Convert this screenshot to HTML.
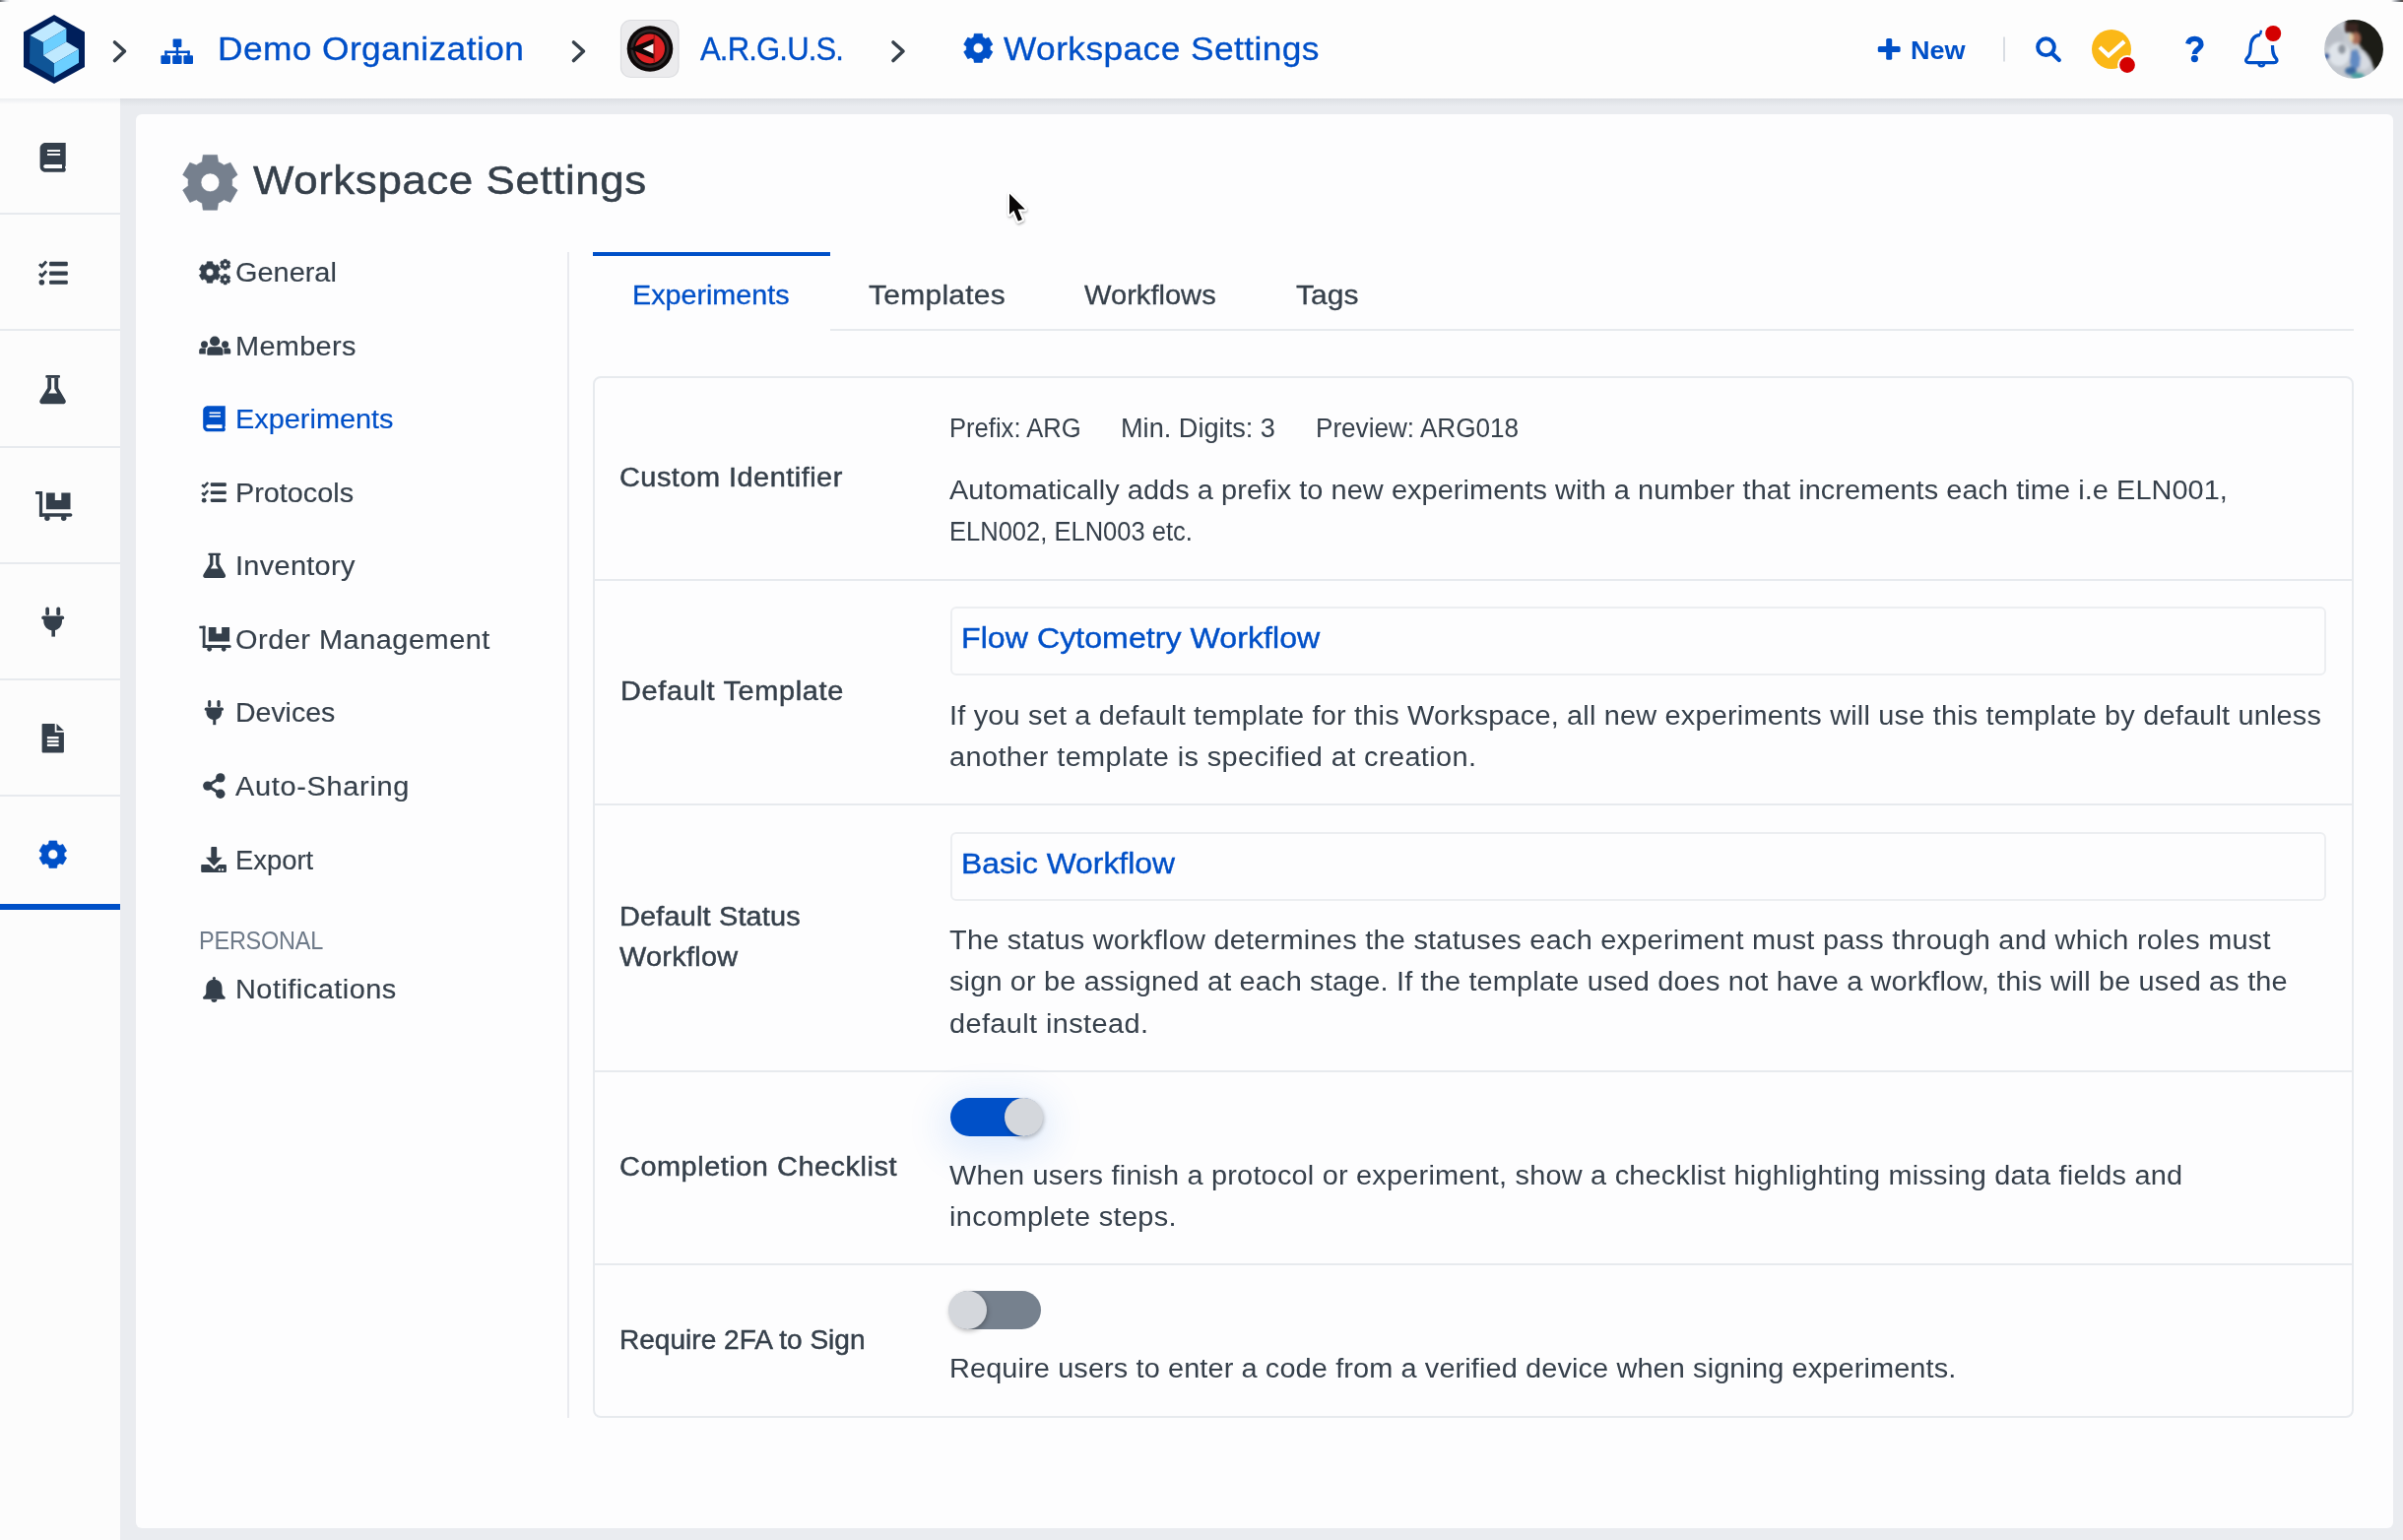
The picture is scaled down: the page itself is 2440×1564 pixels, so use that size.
<!DOCTYPE html>
<html><head><meta charset="utf-8"><title>Workspace Settings</title>
<style>
html,body{margin:0;padding:0;width:2440px;height:1564px;overflow:hidden;background:#eaecf0;font-family:"Liberation Sans",sans-serif;}
.b{position:absolute;box-sizing:border-box;}
.t{position:absolute;white-space:nowrap;transform-origin:0 0;font-family:"Liberation Sans",sans-serif;}
svg.ic{position:absolute;left:0;top:0;width:2440px;height:1564px;}
</style></head><body>
<div class="b" style="left:0;top:0;width:2440px;height:100px;background:#fdfdfd;"></div>
<div class="b" style="left:0;top:0;width:10px;height:1.6px;background:linear-gradient(90deg,#6d7075,rgba(200,205,212,0.6) 60%,rgba(253,253,253,0));"></div>
<div class="b" style="left:2428px;top:0;width:12px;height:2.2px;background:linear-gradient(90deg,rgba(253,253,253,0),#a9adb3 40%,#5e5f62 80%,#5d4f4a);"></div>
<div class="b" style="left:0;top:100px;width:2440px;height:8px;background:linear-gradient(#dcdfe4,#eaecf0);"></div>
<div class="b" style="left:0;top:100px;width:122px;height:1464px;background:#fcfcfc;"></div>
<div class="b" style="left:0;top:100px;width:122px;height:6px;background:linear-gradient(#eceef1,#fcfcfc);"></div>
<div class="b" style="left:0;top:216px;width:122px;height:2px;background:#e7eaee;"></div><div class="b" style="left:0;top:334px;width:122px;height:2px;background:#e7eaee;"></div><div class="b" style="left:0;top:452.5px;width:122px;height:2px;background:#e7eaee;"></div><div class="b" style="left:0;top:570.5px;width:122px;height:2px;background:#e7eaee;"></div><div class="b" style="left:0;top:688.5px;width:122px;height:2px;background:#e7eaee;"></div><div class="b" style="left:0;top:806.5px;width:122px;height:2px;background:#e7eaee;"></div>
<div class="b" style="left:341px;top:954px;width:187px;height:4px;background:#e8ebef;"></div>
<div class="b" style="left:0;top:918px;width:122px;height:6px;background:#0050c8;"></div>
<div class="b" style="left:138px;top:116px;width:2292px;height:1436px;background:#fdfdfe;border-radius:6px;"></div>
<div class="b" style="left:576px;top:256px;width:2px;height:1184px;background:#e9eaef;"></div>
<div class="b" style="left:602px;top:256px;width:241px;height:4px;background:#0050c8;"></div>
<div class="b" style="left:843px;top:334px;width:1547px;height:2px;background:#e7eaee;"></div>
<div class="b" style="left:602px;top:382px;width:1788px;height:1058px;border:2px solid #e7eaee;border-radius:8px;"></div>
<div class="b" style="left:604px;top:587.5px;width:1784px;height:2px;background:#e7eaee;"></div><div class="b" style="left:604px;top:815.8px;width:1784px;height:2px;background:#e7eaee;"></div><div class="b" style="left:604px;top:1087.2px;width:1784px;height:2px;background:#e7eaee;"></div><div class="b" style="left:604px;top:1282.8px;width:1784px;height:2px;background:#e7eaee;"></div>
<div class="b" style="left:965px;top:616px;width:1397px;height:70px;border:2px solid #eceef1;border-radius:6px;"></div>
<div class="b" style="left:965px;top:845px;width:1397px;height:70px;border:2px solid #eceef1;border-radius:6px;"></div>
<div class="b" style="left:965px;top:1115px;width:93px;height:39px;border-radius:20px;background:#0050c8;box-shadow:0 8px 36px 10px rgba(40,120,240,0.13);"></div>
<div class="b" style="left:1020px;top:1115px;width:39px;height:39px;border-radius:50%;background:#d4d7dc;box-shadow:1px 2px 4px rgba(0,0,0,0.25);"></div>
<div class="b" style="left:963.5px;top:1311px;width:93px;height:39px;border-radius:20px;background:#76818e;"></div>
<div class="b" style="left:963px;top:1311px;width:39px;height:39px;border-radius:50%;background:#d4d7dc;box-shadow:1px 2px 5px rgba(0,0,0,0.28);"></div>
<svg class="ic" viewBox="0 0 2440 1564">
<defs><filter id="csh" x="-50%" y="-50%" width="200%" height="200%"><feDropShadow dx="0.5" dy="1.5" stdDeviation="1.2" flood-color="#000" flood-opacity="0.35"/></filter></defs>
<polygon points="55,15 86,32.5 86,68 55,85 24,68 24,32.5" fill="#001f5b"/>
<polygon points="30.5,36 55,21.5 67.4,29 43.7,43" fill="#bfe9ff"/>
<polygon points="43.7,43 67.4,29 67.4,42.5 43.7,56.2" fill="#6ccfff"/>
<polygon points="43.7,56.2 67.4,42.5 80,50 55,64.4" fill="#bfe9ff"/>
<polygon points="55,64.4 80,50 80,63.7 55,78.4" fill="#6ccfff"/>
<polygon points="30.5,36 43.7,43 43.7,56.2 55,64.4 55,78.4 30,64" fill="#0f5597"/>
<polyline points="116.5,43 126.5,52 116.5,61.5" fill="none" stroke="#37414b" stroke-width="3.6" stroke-linecap="round" stroke-linejoin="round"/>
<polyline points="582.5,43 592.5,52 582.5,61.5" fill="none" stroke="#37414b" stroke-width="3.6" stroke-linecap="round" stroke-linejoin="round"/>
<polyline points="907,43 917,52 907,61.5" fill="none" stroke="#37414b" stroke-width="3.6" stroke-linecap="round" stroke-linejoin="round"/>
<g fill="#0050c8"><rect x="175.6" y="39.4" width="8.8" height="8.6" rx="1"/><rect x="178.8" y="47" width="2.4" height="6"/><rect x="167.3" y="51.6" width="25.4" height="2.4"/><rect x="167.3" y="51.6" width="2.4" height="5"/><rect x="178.8" y="51.6" width="2.4" height="5"/><rect x="190.3" y="51.6" width="2.4" height="5"/><rect x="163.4" y="56.2" width="9.6" height="8.8" rx="1"/><rect x="175.2" y="56.2" width="9.4" height="8.8" rx="1"/><rect x="186.4" y="56.2" width="9.6" height="8.8" rx="1"/></g>
<rect x="630.5" y="20.5" width="58.5" height="58" rx="10" fill="#ebebed" stroke="#dcdde0" stroke-width="1.2"/>
<circle cx="660" cy="49.5" r="23.3" fill="#0d0808"/>
<circle cx="660" cy="49.5" r="19.6" fill="#2f2a2b"/>
<circle cx="660" cy="49.5" r="17.0" fill="#120b0b"/>
<circle cx="660" cy="49.5" r="15.0" fill="#e02224"/>
<polygon points="639,49.5 664,39.2 664,44.2 652.5,49.5 664,54.8 664,59.8" fill="#0d0808"/>
<polygon points="652.8,49.6 663.6,44.6 663.6,54.6" fill="#f5f5f5"/>
<rect x="663.6" y="35" width="1.5" height="29" fill="#a01515"/>
<path d="M988.71,37.81 L989.25,34.35 L997.35,34.35 L997.89,37.81 A12.00,12.00 0 0 1 1000.60,39.38 L1003.87,38.12 L1007.92,45.13 L1005.20,47.34 A12.00,12.00 0 0 1 1005.20,50.46 L1007.92,52.67 L1003.87,59.68 L1000.60,58.42 A12.00,12.00 0 0 1 997.89,59.99 L997.35,63.45 L989.25,63.45 L988.71,59.99 A12.00,12.00 0 0 1 986.00,58.42 L982.73,59.68 L978.68,52.67 L981.40,50.46 A12.00,12.00 0 0 1 981.40,47.34 L978.68,45.13 L982.73,38.12 L986.00,39.38 A12.00,12.00 0 0 1 988.71,37.81 Z M998.40,48.90 A5.1,5.1 0 1 0 988.20,48.90 A5.1,5.1 0 1 0 998.40,48.90 Z" fill="#0050c8" fill-rule="evenodd" stroke="#0050c8" stroke-width="0.6" stroke-linejoin="round"/>
<g fill="#0050c8"><rect x="1915.2" y="39" width="6" height="21.8" rx="1.6"/><rect x="1906.8" y="47" width="22.8" height="6" rx="1.6"/></g>
<rect x="2034" y="37.5" width="2" height="25" fill="#d9dde3"/>
<circle cx="2077.5" cy="47.7" r="8.4" fill="none" stroke="#0050c8" stroke-width="3.9"/>
<line x1="2084" y1="54.5" x2="2090.8" y2="61" stroke="#0050c8" stroke-width="4.2" stroke-linecap="round"/>
<circle cx="2144" cy="50" r="20" fill="#fbb817"/>
<polyline points="2133.5,49.5 2141,56.5 2155.5,43.5" fill="none" stroke="#ffffff" stroke-width="4.2" stroke-linecap="square"/>
<circle cx="2160" cy="66" r="10" fill="#fdfdfd"/><circle cx="2160" cy="66" r="7.9" fill="#d40000"/>
<path d="M2221.6,44.6 C2222.6,40.6 2225.4,39.2 2228.8,39.3 C2232.8,39.5 2235.2,42 2235,45.4 C2234.8,49.4 2228.6,50.2 2228.4,55" fill="none" stroke="#0050c8" stroke-width="5.2" stroke-linecap="butt"/>
<circle cx="2228.4" cy="59.6" r="3.6" fill="#0050c8"/>
<path d="M2295,35.3 C2288,36 2285.5,41 2285.2,48 C2285,54 2284.5,56 2281.5,59.2 C2279.6,61.4 2281,63.7 2283.5,63.7 L2309,63.7 C2311.5,63.7 2313,61.4 2311,59.2 C2308,56 2307.5,53 2307.5,46" fill="none" stroke="#0050c8" stroke-width="3.2" stroke-linejoin="round"/>
<path d="M2293.6,64.5 A2.7,2.7 0 0 0 2299,64.5" fill="none" stroke="#0050c8" stroke-width="2.6"/>
<path d="M2295,35.3 L2296,30.8" stroke="#0050c8" stroke-width="2.4"/>
<circle cx="2308.2" cy="34" r="10" fill="#fdfdfd"/><circle cx="2308.2" cy="34" r="8" fill="#d40000"/>
<defs><clipPath id="av"><circle cx="2390" cy="49.9" r="29.9"/></clipPath><filter id="bl" x="-20%" y="-20%" width="140%" height="140%"><feGaussianBlur stdDeviation="1.8"/></filter></defs>
<g clip-path="url(#av)"><rect x="2358" y="18" width="64" height="64" fill="#c3c8cf"/>
<g filter="url(#bl)">
<ellipse cx="2370" cy="38" rx="10" ry="12" fill="#b9bec6"/>
<ellipse cx="2375" cy="55" rx="11" ry="12" fill="#dfe4ea"/>
<ellipse cx="2400" cy="62" rx="7" ry="9" fill="#d7dbe2"/>
<polygon points="2381,18 2424,18 2424,82 2413,74 2405,58 2396,46 2389,36 2383,30" fill="#1f1c15"/>
<rect x="2381" y="24" width="13" height="9" fill="#3a2620"/>
<ellipse cx="2392" cy="39" rx="4.5" ry="6" fill="#a86a55"/>
<ellipse cx="2387.5" cy="38" rx="2" ry="4" fill="#e8cfa6"/>
<ellipse cx="2378" cy="50" rx="4" ry="5" fill="#9097a0"/>
<polygon points="2387,52 2393,50 2397,58 2396,68 2388,71 2386,62" fill="#4f7fc0" opacity="0.85"/>
<ellipse cx="2387" cy="72" rx="6" ry="4" fill="#2f5f9a" opacity="0.9"/>
<ellipse cx="2394" cy="77" rx="7" ry="3" fill="#4aa0a0"/>
<ellipse cx="2363" cy="57" rx="2.5" ry="3" fill="#1d4f9a"/>
</g></g>
<g transform="translate(40.6 144.9) scale(1)"><path d="M5.5,0 L26.1,0 L26.1,23.5 C25.4,24 25.2,25 25.6,25.8 L26.1,26.4 C26.4,28.2 25.8,29.9 24,29.9 L5.5,29.9 C2.5,29.9 0,27.4 0,24.4 L0,5.5 C0,2.5 2.5,0 5.5,0 Z" fill="#343f4b"/><rect x="7.4" y="7.2" width="13.1" height="1.9" fill="#fcfcfc"/><rect x="7.4" y="11.1" width="13.1" height="1.9" fill="#fcfcfc"/><path d="M5.6,22 L22.4,22 L22.4,26.1 L5.6,26.1 C4.3,26.1 3.6,25 3.6,24.05 C3.6,23 4.3,22 5.6,22 Z" fill="#fcfcfc"/></g>
<g transform="translate(38.9 264.4) scale(1)" fill="#343f4b"><polyline points="1.1,3.9 3.6,6.2 8.2,1.2" fill="none" stroke="#343f4b" stroke-width="2.9"/><polyline points="1.1,13.5 3.6,15.8 8.2,10.8" fill="none" stroke="#343f4b" stroke-width="2.9"/><circle cx="3.5" cy="22.4" r="2.8"/><rect x="11.2" y="1.4" width="18.7" height="4.5" rx="1.2"/><rect x="11.2" y="11.1" width="18.7" height="4.2" rx="1.2"/><rect x="11.2" y="20.4" width="18.7" height="4" rx="1.2"/></g>
<g transform="translate(40.3 380.3) scale(1)"><rect x="6" y="0.8" width="14.7" height="2.6" rx="1" fill="#343f4b"/><path d="M8,3.3 L18.9,3.3 L18.9,13.7 L26.1,26 C27.2,28 26,30 23.6,30 L2.8,30 C0.5,30 -0.7,28 0.4,26 L8,13.7 Z" fill="#343f4b"/><path d="M11.8,3.6 L15,3.6 L15,14.5 L17.9,19.2 L8.9,19.2 L11.8,14.5 Z" fill="#fcfcfc"/></g>
<g transform="translate(35.8 493) scale(1)" fill="#343f4b"><rect x="0.2" y="6" width="7" height="3" rx="0.4"/><rect x="4.1" y="6" width="3.2" height="25.8"/><rect x="4.1" y="28.2" width="33.5" height="3.6" rx="1.8"/><circle cx="12.1" cy="33.3" r="2.7"/><circle cx="28.9" cy="33.3" r="2.7"/><path d="M11.1,7.5 L20,7.5 L20,15.1 L26.5,15.1 L26.5,7.5 L35.7,7.5 L35.7,24.3 L11.1,24.3 Z"/></g>
<g transform="translate(42.2 616.6) scale(1)" fill="#343f4b"><rect x="4.1" y="0" width="3.7" height="8.5" rx="1.8"/><rect x="15.1" y="0" width="3.9" height="8.5" rx="1.9"/><rect x="0" y="9" width="23" height="3.7" rx="1.8"/><path d="M2.1,12 L20.8,12 L20.8,14.5 C20.8,19.5 17,23.6 12,23.8 L11,23.8 C6,23.6 2.1,19.5 2.1,14.5 Z"/><rect x="10.2" y="22.5" width="3.6" height="7.5"/></g>
<g transform="translate(42.6 734.9) scale(1)"><path d="M0.8,0 L13.1,0 L13.1,8.9 L22.3,8.9 L22.3,28.7 C22.3,29.1 21.9,29.5 21.5,29.5 L0.8,29.5 C0.4,29.5 0,29.1 0,28.7 L0,0.8 C0,0.4 0.4,0 0.8,0 Z" fill="#343f4b"/><polygon points="14.9,0.2 22.3,7.1 14.9,7.1" fill="#343f4b"/><rect x="5.3" y="13.1" width="11.7" height="2.4" fill="#fcfcfc"/><rect x="5.3" y="16.9" width="11.7" height="2.4" fill="#fcfcfc"/><rect x="5.3" y="20.7" width="11.7" height="2.4" fill="#fcfcfc"/></g>
<path d="M49.43,857.17 L49.95,853.93 L57.65,853.93 L58.17,857.17 A11.40,11.40 0 0 1 60.73,858.65 L63.80,857.48 L67.65,864.15 L65.10,866.22 A11.40,11.40 0 0 1 65.10,869.18 L67.65,871.25 L63.80,877.92 L60.73,876.75 A11.40,11.40 0 0 1 58.17,878.23 L57.65,881.47 L49.95,881.47 L49.43,878.23 A11.40,11.40 0 0 1 46.87,876.75 L43.80,877.92 L39.95,871.25 L42.50,869.18 A11.40,11.40 0 0 1 42.50,866.22 L39.95,864.15 L43.80,857.48 L46.87,858.65 A11.40,11.40 0 0 1 49.43,857.17 Z M58.70,867.70 A4.9,4.9 0 1 0 48.90,867.70 A4.9,4.9 0 1 0 58.70,867.70 Z" fill="#0050c8" fill-rule="evenodd" stroke="#0050c8" stroke-width="0.6" stroke-linejoin="round"/>
<path d="M205.25,164.43 L206.23,157.41 L220.57,157.41 L221.55,164.43 A22.40,22.40 0 0 1 227.40,167.81 L233.97,165.14 L241.14,177.57 L235.54,181.92 A22.40,22.40 0 0 1 235.54,188.68 L241.14,193.03 L233.97,205.46 L227.40,202.79 A22.40,22.40 0 0 1 221.55,206.17 L220.57,213.19 L206.23,213.19 L205.25,206.17 A22.40,22.40 0 0 1 199.40,202.79 L192.83,205.46 L185.66,193.03 L191.26,188.68 A22.40,22.40 0 0 1 191.26,181.92 L185.66,177.57 L192.83,165.14 L199.40,167.81 A22.40,22.40 0 0 1 205.25,164.43 Z M222.80,185.30 A9.4,9.4 0 1 0 204.00,185.30 A9.4,9.4 0 1 0 222.80,185.30 Z" fill="#76808e" fill-rule="evenodd" stroke="#76808e" stroke-width="0.6" stroke-linejoin="round"/>
<path d="M209.85,268.28 L210.23,265.75 L215.77,265.75 L216.15,268.28 A8.80,8.80 0 0 1 218.54,269.66 L220.92,268.73 L223.69,273.52 L221.69,275.12 A8.80,8.80 0 0 1 221.69,277.88 L223.69,279.48 L220.92,284.27 L218.54,283.34 A8.80,8.80 0 0 1 216.15,284.72 L215.77,287.25 L210.23,287.25 L209.85,284.72 A8.80,8.80 0 0 1 207.46,283.34 L205.08,284.27 L202.31,279.48 L204.31,277.88 A8.80,8.80 0 0 1 204.31,275.12 L202.31,273.52 L205.08,268.73 L207.46,269.66 A8.80,8.80 0 0 1 209.85,268.28 Z M216.80,276.50 A3.8,3.8 0 1 0 209.20,276.50 A3.8,3.8 0 1 0 216.80,276.50 Z" fill="#343f4b" fill-rule="evenodd" stroke="#343f4b" stroke-width="0.6" stroke-linejoin="round"/>
<path d="M227.13,264.60 L227.32,263.38 L230.08,263.38 L230.27,264.60 A4.30,4.30 0 0 1 231.38,265.24 L232.53,264.79 L233.91,267.19 L232.95,267.96 A4.30,4.30 0 0 1 232.95,269.24 L233.91,270.01 L232.53,272.41 L231.38,271.96 A4.30,4.30 0 0 1 230.27,272.60 L230.08,273.82 L227.32,273.82 L227.13,272.60 A4.30,4.30 0 0 1 226.02,271.96 L224.87,272.41 L223.49,270.01 L224.45,269.24 A4.30,4.30 0 0 1 224.45,267.96 L223.49,267.19 L224.87,264.79 L226.02,265.24 A4.30,4.30 0 0 1 227.13,264.60 Z M230.50,268.60 A1.8,1.8 0 1 0 226.90,268.60 A1.8,1.8 0 1 0 230.50,268.60 Z" fill="#343f4b" fill-rule="evenodd" stroke="#343f4b" stroke-width="0.6" stroke-linejoin="round"/>
<path d="M227.13,279.70 L227.32,278.48 L230.08,278.48 L230.27,279.70 A4.30,4.30 0 0 1 231.38,280.34 L232.53,279.89 L233.91,282.29 L232.95,283.06 A4.30,4.30 0 0 1 232.95,284.34 L233.91,285.11 L232.53,287.51 L231.38,287.06 A4.30,4.30 0 0 1 230.27,287.70 L230.08,288.92 L227.32,288.92 L227.13,287.70 A4.30,4.30 0 0 1 226.02,287.06 L224.87,287.51 L223.49,285.11 L224.45,284.34 A4.30,4.30 0 0 1 224.45,283.06 L223.49,282.29 L224.87,279.89 L226.02,280.34 A4.30,4.30 0 0 1 227.13,279.70 Z M230.50,283.70 A1.8,1.8 0 1 0 226.90,283.70 A1.8,1.8 0 1 0 230.50,283.70 Z" fill="#343f4b" fill-rule="evenodd" stroke="#343f4b" stroke-width="0.6" stroke-linejoin="round"/>
<g fill="#343f4b"><circle cx="218.1" cy="346.5" r="5.1"/><path d="M210.3,356 C210.3,353.8 212,352.3 214,352.3 L222.6,352.3 C224.7,352.3 226.5,353.9 226.5,356 L226.5,359.5 C226.5,360.2 226,360.8 225.3,360.8 L211.5,360.8 C210.8,360.8 210.3,360.2 210.3,359.5 Z"/><circle cx="207.5" cy="349.7" r="3.5"/><path d="M202.2,356 C202.2,354.6 203.3,353.6 204.6,353.6 L208.8,353.6 L208.8,359.4 L203.2,359.4 C202.6,359.4 202.2,359 202.2,358.4 Z"/><circle cx="228.6" cy="349.7" r="3.5"/><path d="M227.4,353.6 L231.8,353.6 C233.1,353.6 234.2,354.6 234.2,356 L234.2,358.4 C234.2,359 233.8,359.4 233.2,359.4 L227.4,359.4 Z"/></g>
<g transform="translate(206.2 412.3) scale(0.865)"><path d="M5.5,0 L26.1,0 L26.1,23.5 C25.4,24 25.2,25 25.6,25.8 L26.1,26.4 C26.4,28.2 25.8,29.9 24,29.9 L5.5,29.9 C2.5,29.9 0,27.4 0,24.4 L0,5.5 C0,2.5 2.5,0 5.5,0 Z" fill="#0050c8"/><rect x="7.4" y="7.2" width="13.1" height="1.9" fill="#fdfdfe"/><rect x="7.4" y="11.1" width="13.1" height="1.9" fill="#fdfdfe"/><path d="M5.6,22 L22.4,22 L22.4,26.1 L5.6,26.1 C4.3,26.1 3.6,25 3.6,24.05 C3.6,23 4.3,22 5.6,22 Z" fill="#fdfdfe"/></g>
<g transform="translate(204.2 489) scale(0.85635)" fill="#343f4b"><polyline points="1.1,3.9 3.6,6.2 8.2,1.2" fill="none" stroke="#343f4b" stroke-width="2.9"/><polyline points="1.1,13.5 3.6,15.8 8.2,10.8" fill="none" stroke="#343f4b" stroke-width="2.9"/><circle cx="3.5" cy="22.4" r="2.8"/><rect x="11.2" y="1.4" width="18.7" height="4.5" rx="1.2"/><rect x="11.2" y="11.1" width="18.7" height="4.2" rx="1.2"/><rect x="11.2" y="20.4" width="18.7" height="4" rx="1.2"/></g>
<g transform="translate(206.2 561) scale(0.865)"><rect x="6" y="0.8" width="14.7" height="2.6" rx="1" fill="#343f4b"/><path d="M8,3.3 L18.9,3.3 L18.9,13.7 L26.1,26 C27.2,28 26,30 23.6,30 L2.8,30 C0.5,30 -0.7,28 0.4,26 L8,13.7 Z" fill="#343f4b"/><path d="M11.8,3.6 L15,3.6 L15,14.5 L17.9,19.2 L8.9,19.2 L11.8,14.5 Z" fill="#fdfdfe"/></g>
<g transform="translate(202.2 630.5) scale(0.865)" fill="#343f4b"><rect x="0.2" y="6" width="7" height="3" rx="0.4"/><rect x="4.1" y="6" width="3.2" height="25.8"/><rect x="4.1" y="28.2" width="33.5" height="3.6" rx="1.8"/><circle cx="12.1" cy="33.3" r="2.7"/><circle cx="28.9" cy="33.3" r="2.7"/><path d="M11.1,7.5 L20,7.5 L20,15.1 L26.5,15.1 L26.5,7.5 L35.7,7.5 L35.7,24.3 L11.1,24.3 Z"/></g>
<g transform="translate(207.7 711) scale(0.83905)" fill="#343f4b"><rect x="4.1" y="0" width="3.7" height="8.5" rx="1.8"/><rect x="15.1" y="0" width="3.9" height="8.5" rx="1.9"/><rect x="0" y="9" width="23" height="3.7" rx="1.8"/><path d="M2.1,12 L20.8,12 L20.8,14.5 C20.8,19.5 17,23.6 12,23.8 L11,23.8 C6,23.6 2.1,19.5 2.1,14.5 Z"/><rect x="10.2" y="22.5" width="3.6" height="7.5"/></g>
<g fill="#343f4b"><circle cx="223.8" cy="789.9" r="4.7"/><circle cx="210.8" cy="798.1" r="4.7"/><circle cx="223.8" cy="806.2" r="4.7"/><line x1="210.8" y1="798.1" x2="223.8" y2="789.9" stroke="#343f4b" stroke-width="3"/><line x1="210.8" y1="798.1" x2="223.8" y2="806.2" stroke="#343f4b" stroke-width="3"/></g>
<g fill="#343f4b"><rect x="214.3" y="860.1" width="5.9" height="11" rx="0.8"/><polygon points="208.9,870.7 225.7,870.7 217.3,879.5"/><path d="M205,878.1 L212.3,878.1 L217.3,882.8 L222.3,878.1 L229.1,878.1 C229.6,878.1 229.9,878.5 229.9,879 L229.9,885.1 C229.9,885.6 229.6,885.9 229.1,885.9 L205,885.9 C204.5,885.9 204.2,885.6 204.2,885.1 L204.2,879 C204.2,878.5 204.5,878.1 205,878.1 Z"/><rect x="221.8" y="882.3" width="2" height="2" fill="#fdfdfe"/><rect x="225.1" y="882.3" width="2" height="2" fill="#fdfdfe"/></g>
<g fill="#343f4b"><circle cx="217.4" cy="993.6" r="1.6"/><path d="M217.4,994.7 C212,994.7 209.3,998.5 209.3,1003.5 L209.3,1008 C209.3,1010 208,1011.5 206.5,1012.3 C205.8,1012.8 206,1014.8 207,1014.8 L227.8,1014.8 C228.8,1014.8 229,1012.8 228.3,1012.3 C226.8,1011.5 225.5,1010 225.5,1008 L225.5,1003.5 C225.5,998.5 222.8,994.7 217.4,994.7 Z"/><path d="M214.4,1015 A3,3 0 0 0 220.4,1015 Z"/></g>
<g filter="url(#csh)"><path d="M1025,196.8 L1025,217.8 L1029.4,213.8 L1033.9,224.6 L1037.9,222.9 L1033.5,212.6 L1040.8,212.5 Z" fill="#ffffff" stroke="#ffffff" stroke-width="4" stroke-linejoin="round"/></g>
<path d="M1025,196.8 L1025,217.8 L1029.4,213.8 L1033.9,224.6 L1037.9,222.9 L1033.5,212.6 L1040.8,212.5 Z" fill="#0a0808"/>
</svg>
<div class="t" style="left:221.00px;top:33.06px;font-size:33px;line-height:33px;letter-spacing:0.387px;color:#0050c8;-webkit-text-stroke:0.3px #0050c8;transform:scaleX(1.0700);">Demo Organization</div>
<div class="t" style="left:710.70px;top:33.36px;font-size:33px;line-height:33px;letter-spacing:-0.877px;color:#0050c8;-webkit-text-stroke:0.3px #0050c8;transform:scaleX(0.9400);">A.R.G.U.S.</div>
<div class="t" style="left:1018.60px;top:33.06px;font-size:33px;line-height:33px;letter-spacing:0.390px;color:#0050c8;-webkit-text-stroke:0.3px #0050c8;transform:scaleX(1.0700);">Workspace Settings</div>
<div class="t" style="left:1939.80px;top:37.99px;font-size:26px;line-height:26px;letter-spacing:0.000px;color:#0050c8;font-weight:bold;transform:scaleX(1.0407);">New</div>
<div class="t" style="left:256.50px;top:163.09px;font-size:41px;line-height:41px;letter-spacing:0.540px;color:#36404b;-webkit-text-stroke:0.5px #36404b;transform:scaleX(1.0700);">Workspace Settings</div>
<div class="t" style="left:238.50px;top:263.54px;font-size:27px;line-height:27px;letter-spacing:0.012px;color:#36404b;-webkit-text-stroke:0.15px #36404b;transform:scaleX(1.0700);">General</div>
<div class="t" style="left:238.50px;top:338.84px;font-size:27px;line-height:27px;letter-spacing:0.310px;color:#36404b;-webkit-text-stroke:0.15px #36404b;transform:scaleX(1.0700);">Members</div>
<div class="t" style="left:238.50px;top:412.94px;font-size:27px;line-height:27px;letter-spacing:0.000px;color:#0050c8;-webkit-text-stroke:0.15px #0050c8;transform:scaleX(1.0700);">Experiments</div>
<div class="t" style="left:239.00px;top:487.74px;font-size:27px;line-height:27px;letter-spacing:0.000px;color:#36404b;-webkit-text-stroke:0.15px #36404b;transform:scaleX(1.0664);">Protocols</div>
<div class="t" style="left:239.00px;top:562.04px;font-size:27px;line-height:27px;letter-spacing:0.299px;color:#36404b;-webkit-text-stroke:0.15px #36404b;transform:scaleX(1.0700);">Inventory</div>
<div class="t" style="left:238.50px;top:636.64px;font-size:27px;line-height:27px;letter-spacing:0.489px;color:#36404b;-webkit-text-stroke:0.15px #36404b;transform:scaleX(1.0700);">Order Management</div>
<div class="t" style="left:238.80px;top:711.44px;font-size:27px;line-height:27px;letter-spacing:0.000px;color:#36404b;-webkit-text-stroke:0.15px #36404b;transform:scaleX(1.0542);">Devices</div>
<div class="t" style="left:238.80px;top:785.94px;font-size:27px;line-height:27px;letter-spacing:0.658px;color:#36404b;-webkit-text-stroke:0.15px #36404b;transform:scaleX(1.0700);">Auto-Sharing</div>
<div class="t" style="left:238.80px;top:860.54px;font-size:27px;line-height:27px;letter-spacing:0.000px;color:#36404b;-webkit-text-stroke:0.15px #36404b;transform:scaleX(1.0152);">Export</div>
<div class="t" style="left:238.80px;top:992.34px;font-size:27px;line-height:27px;letter-spacing:0.460px;color:#36404b;-webkit-text-stroke:0.15px #36404b;transform:scaleX(1.0700);">Notifications</div>
<div class="t" style="left:202.20px;top:943.23px;font-size:25px;line-height:25px;letter-spacing:-0.249px;color:#6e7a89;transform:scaleX(0.9400);">PERSONAL</div>
<div class="t" style="left:641.80px;top:286.49px;font-size:28px;line-height:28px;letter-spacing:-0.000px;color:#0050c8;-webkit-text-stroke:0.3px #0050c8;transform:scaleX(1.0250);">Experiments</div>
<div class="t" style="left:882.10px;top:286.49px;font-size:28px;line-height:28px;letter-spacing:0.262px;color:#36404b;-webkit-text-stroke:0.3px #36404b;transform:scaleX(1.0700);">Templates</div>
<div class="t" style="left:1101.20px;top:286.49px;font-size:28px;line-height:28px;letter-spacing:0.000px;color:#36404b;-webkit-text-stroke:0.3px #36404b;transform:scaleX(1.0395);">Workflows</div>
<div class="t" style="left:1315.80px;top:286.49px;font-size:28px;line-height:28px;letter-spacing:0.053px;color:#36404b;-webkit-text-stroke:0.3px #36404b;transform:scaleX(1.0700);">Tags</div>
<div class="t" style="left:629.30px;top:472.34px;font-size:27px;line-height:27px;letter-spacing:0.463px;color:#36404b;-webkit-text-stroke:0.45px #36404b;transform:scaleX(1.0700);">Custom Identifier</div>
<div class="t" style="left:629.80px;top:689.14px;font-size:27px;line-height:27px;letter-spacing:0.627px;color:#36404b;-webkit-text-stroke:0.45px #36404b;transform:scaleX(1.0700);">Default Template</div>
<div class="t" style="left:629.40px;top:917.84px;font-size:27px;line-height:27px;letter-spacing:0.165px;color:#36404b;-webkit-text-stroke:0.45px #36404b;transform:scaleX(1.0700);">Default Status</div>
<div class="t" style="left:629.40px;top:959.34px;font-size:27px;line-height:27px;letter-spacing:0.244px;color:#36404b;-webkit-text-stroke:0.45px #36404b;transform:scaleX(1.0700);">Workflow</div>
<div class="t" style="left:629.30px;top:1171.94px;font-size:27px;line-height:27px;letter-spacing:0.498px;color:#36404b;-webkit-text-stroke:0.45px #36404b;transform:scaleX(1.0700);">Completion Checklist</div>
<div class="t" style="left:629.30px;top:1348.14px;font-size:27px;line-height:27px;letter-spacing:-0.000px;color:#36404b;-webkit-text-stroke:0.45px #36404b;transform:scaleX(1.0392);">Require 2FA to Sign</div>
<div class="t" style="left:964.20px;top:422.44px;font-size:27px;line-height:27px;letter-spacing:0.000px;color:#36404b;transform:scaleX(0.9475);">Prefix: ARG</div>
<div class="t" style="left:1138.40px;top:422.44px;font-size:27px;line-height:27px;letter-spacing:0.000px;color:#36404b;transform:scaleX(1.0058);">Min. Digits: 3</div>
<div class="t" style="left:1335.60px;top:422.44px;font-size:27px;line-height:27px;letter-spacing:0.000px;color:#36404b;transform:scaleX(0.9667);">Preview: ARG018</div>
<div class="t" style="left:964.20px;top:485.24px;font-size:27px;line-height:27px;letter-spacing:0.066px;color:#36404b;transform:scaleX(1.0700);">Automatically adds a prefix to new experiments with a number that increments each time i.e ELN001,</div>
<div class="t" style="left:964.20px;top:526.84px;font-size:27px;line-height:27px;letter-spacing:0.000px;color:#36404b;transform:scaleX(0.9456);">ELN002, ELN003 etc.</div>
<div class="t" style="left:964.30px;top:714.14px;font-size:27px;line-height:27px;letter-spacing:0.176px;color:#36404b;transform:scaleX(1.0700);">If you set a default template for this Workspace, all new experiments will use this template by default unless</div>
<div class="t" style="left:964.00px;top:756.14px;font-size:27px;line-height:27px;letter-spacing:0.373px;color:#36404b;transform:scaleX(1.0700);">another template is specified at creation.</div>
<div class="t" style="left:964.00px;top:942.34px;font-size:27px;line-height:27px;letter-spacing:0.239px;color:#36404b;transform:scaleX(1.0700);">The status workflow determines the statuses each experiment must pass through and which roles must</div>
<div class="t" style="left:964.00px;top:984.34px;font-size:27px;line-height:27px;letter-spacing:0.157px;color:#36404b;transform:scaleX(1.0700);">sign or be assigned at each stage. If the template used does not have a workflow, this will be used as the</div>
<div class="t" style="left:964.00px;top:1026.54px;font-size:27px;line-height:27px;letter-spacing:0.373px;color:#36404b;transform:scaleX(1.0700);">default instead.</div>
<div class="t" style="left:964.00px;top:1180.84px;font-size:27px;line-height:27px;letter-spacing:0.199px;color:#36404b;transform:scaleX(1.0700);">When users finish a protocol or experiment, show a checklist highlighting missing data fields and</div>
<div class="t" style="left:964.00px;top:1223.14px;font-size:27px;line-height:27px;letter-spacing:0.339px;color:#36404b;transform:scaleX(1.0700);">incomplete steps.</div>
<div class="t" style="left:964.00px;top:1376.84px;font-size:27px;line-height:27px;letter-spacing:0.109px;color:#36404b;transform:scaleX(1.0700);">Require users to enter a code from a verified device when signing experiments.</div>
<div class="t" style="left:976.00px;top:632.80px;font-size:30px;line-height:30px;letter-spacing:0.042px;color:#0050c8;-webkit-text-stroke:0.4px #0050c8;transform:scaleX(1.0700);">Flow Cytometry Workflow</div>
<div class="t" style="left:975.90px;top:861.80px;font-size:30px;line-height:30px;letter-spacing:0.000px;color:#0050c8;-webkit-text-stroke:0.4px #0050c8;transform:scaleX(1.0605);">Basic Workflow</div>
<div class="b" style="left:1323px;top:1295px;width:1px;height:1px;"></div>
</body></html>
